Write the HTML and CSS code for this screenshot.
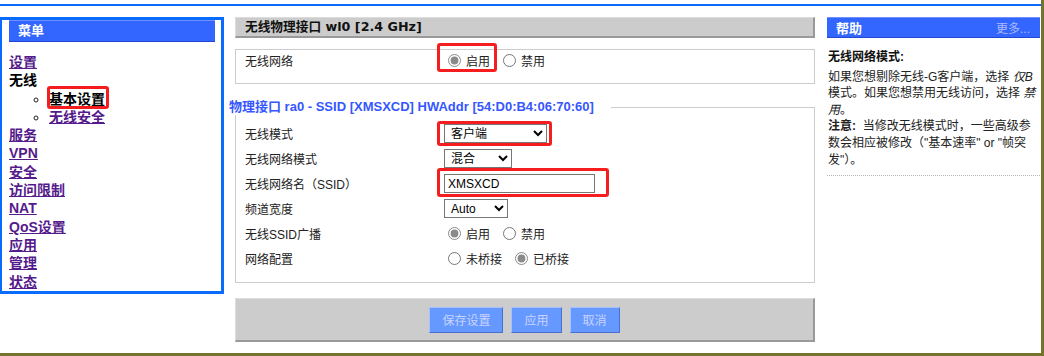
FILE: index.html
```html
<!DOCTYPE html>
<html lang="zh-CN">
<head>
<meta charset="utf-8">
<title>无线 - 基本设置</title>
<link rel="stylesheet" href="styles.css">
</head>
<body>
<div class="frame">
  <div class="topline"></div>
  <div class="layout">
    <nav class="sidebar">
      <div class="menu-head">菜单</div>
      <ul class="menu">
        <li><a href="#">设置</a></li>
        <li><span class="cur">无线</span>
          <ul class="sub">
            <li><span class="cur mark mark-nav">基本设置</span></li>
            <li><a href="#">无线安全</a></li>
          </ul>
        </li>
        <li><a href="#">服务</a></li>
        <li><a href="#">VPN</a></li>
        <li><a href="#">安全</a></li>
        <li><a href="#">访问限制</a></li>
        <li><a href="#">NAT</a></li>
        <li><a href="#">QoS设置</a></li>
        <li><a href="#">应用</a></li>
        <li><a href="#">管理</a></li>
        <li><a href="#">状态</a></li>
      </ul>
    </nav>

    <main class="main">
      <div class="bar-title">无线物理接口 wl0 [2.4 GHz]</div>
      <div class="box">
        <div class="row row-box">
          <span class="label">无线网络</span>
          <span class="val">
            <span class="mark mark-radio"><input type="radio" name="net" checked><span class="opt">启用</span></span>
            <input type="radio" name="net"><span class="opt">禁用</span>
          </span>
        </div>
      </div>

      <fieldset class="fs">
        <legend>物理接口 ra0 - SSID [XMSXCD] HWAddr [54:D0:B4:06:70:60]</legend>
        <div class="row">
          <span class="label">无线模式</span>
          <span class="val"><span class="mark mark-select"><select class="sel sel-mode"><option>客户端</option></select></span></span>
        </div>
        <div class="row">
          <span class="label">无线网络模式</span>
          <span class="val"><select class="sel sel-net"><option>混合</option></select></span>
        </div>
        <div class="row">
          <span class="label">无线网络名（SSID）</span>
          <span class="val"><span class="mark mark-input"><input class="txt" type="text" value="XMSXCD"></span></span>
        </div>
        <div class="row">
          <span class="label">频道宽度</span>
          <span class="val"><select class="sel sel-auto"><option>Auto</option></select></span>
        </div>
        <div class="row">
          <span class="label">无线SSID广播</span>
          <span class="val"><input type="radio" name="bc" checked><span class="opt">启用</span><input type="radio" name="bc"><span class="opt">禁用</span></span>
        </div>
        <div class="row">
          <span class="label">网络配置</span>
          <span class="val"><input type="radio" name="br"><span class="opt">未桥接</span><input type="radio" name="br" checked><span class="opt">已桥接</span></span>
        </div>
      </fieldset>

      <div class="btnbar">
        <button class="btn" type="button">保存设置</button>
        <button class="btn" type="button">应用</button>
        <button class="btn" type="button">取消</button>
      </div>
    </main>

    <aside class="help">
      <div class="help-head"><span class="help-title">帮助</span><a class="more" href="#">更多...</a></div>
      <div class="help-body">
        <div class="help-h">无线网络模式:</div>
        <p class="help-p">如果您想剔除无线-G客户端，选择 <i>仅B</i>模式。如果您想禁用无线访问，选择 <i>禁用</i>。<br><b>注意:</b>&nbsp; 当修改无线模式时，一些高级参数会相应被修改（"基本速率" or "帧突发"）。</p>
      </div>
    </aside>
  </div>
</div>
</body>
</html>
```

FILE: styles.css
```css
html, body {
  margin: 0;
  padding: 0;
  background: #ffffff;
}

.frame {
  width: 1044px;
  height: 356px;
  box-sizing: border-box;
  border-right: 3px solid #76732f;
  border-bottom: 3px solid #76732f;
  overflow: hidden;
  font-family: "Liberation Sans", "Noto Sans CJK SC", sans-serif;
  font-size: 12px;
  color: #222;
}

.topline {
  height: 2px;
  margin-top: 4px;
  background: #0a6cff;
}

.layout {
  display: flex;
  align-items: flex-start;
  margin-top: 11px;
}

/* ---------- sidebar ---------- */
.sidebar {
  width: 224px;
  height: 277px;
  box-sizing: border-box;
  border: 3px solid #0a6cff;
  border-left-width: 2px;
  padding: 0 6px 0 7px;
}

.menu-head {
  height: 22px;
  box-sizing: border-box;
  background: #3366ff;
  border-top: 1px solid #6f8fff;
  border-bottom: 1px solid #2247d0;
  color: #fff;
  font: bold 13px/20px "Liberation Sans", "Noto Sans CJK SC", sans-serif;
  padding-left: 9px;
}

.menu, .sub {
  margin: 0;
  padding: 0;
  list-style: none;
}

.menu {
  margin-top: 11px;
  font: bold 14px/18.3px "Liberation Sans", "Noto Sans CJK SC", sans-serif;
}

.sub {
  list-style: circle;
  padding-left: 40px;
}

.menu a {
  color: #551a8b;
  text-decoration: underline;
}

.cur {
  color: #000;
}

/* ---------- annotation marks ---------- */
.mark {
  position: relative;
  display: inline-block;
}

.mark::after {
  content: "";
  position: absolute;
  border: 3px solid #f51d1d;
  border-radius: 3px;
  pointer-events: none;
}

.mark-nav {
  line-height: 18.3px;
}

.mark-nav::after {
  left: -2px;
  right: -4px;
  top: -4px;
  bottom: -1px;
}

.mark-radio {
  display: inline-flex;
  align-items: center;
}

.mark-radio::after {
  left: -7px;
  right: -7px;
  top: -9px;
  bottom: -3px;
}

.mark-select::after {
  left: -7px;
  right: -5px;
  top: -3px;
  bottom: -3px;
}

.mark-input::after {
  left: -7px;
  right: -14px;
  top: -6px;
  bottom: -4px;
}

/* ---------- main ---------- */
.main {
  width: 580px;
  margin-left: 11px;
}

.bar-title {
  height: 21px;
  box-sizing: border-box;
  background: #cccccc;
  border-top: 1px solid #dcdcdc;
  border-left: 1px solid #dcdcdc;
  border-right: 2px solid #999;
  border-bottom: 2px solid #999;
  padding-left: 9px;
  font: bold 12.7px/18px "DejaVu Sans", "Noto Sans CJK SC", sans-serif;
  color: #111;
}

.box {
  margin-top: 11px;
  height: 35px;
  box-sizing: border-box;
  border: 1px solid #cccccc;
  padding: 0 9px;
}

.row {
  display: flex;
  align-items: center;
  height: 25px;
}

.row-box {
  height: 21px;
}

.label {
  width: 199px;
  flex: none;
  color: #222;
}

.val {
  display: flex;
  align-items: center;
}

input[type="radio"] {
  width: 13px;
  height: 13px;
  margin: 0 5px 0 4px;
  accent-color: #8a8a8a;
}

.opt {
  margin-right: 9px;
}

.mark-radio .opt {
  margin-right: 0;
}

.mark-radio + input[type="radio"] {
  margin-left: 13px;
}

.fs {
  margin: 15px 0 0 0;
  padding: 6px 9px 11px 9px;
  border: 1px solid #cccccc;
}

.fs legend {
  white-space: nowrap;
  margin-left: -16px;
  padding: 0 17px 0 0;
  font: bold 13px/16px "Liberation Sans", "Noto Sans CJK SC", sans-serif;
  color: #3657ff;
}

.sel {
  height: 19px;
  box-sizing: border-box;
  font: 12px "Liberation Sans", "Noto Sans CJK SC", sans-serif;
  color: #000;
  padding: 0 0 0 2px;
  margin: 0;
  border: 1px solid #767676;
  border-radius: 0;
  background: #fff;
}

.sel-mode { width: 103px; }
.sel-net { width: 68px; }
.sel-auto { width: 64px; }

.txt {
  width: 151px;
  height: 19px;
  box-sizing: border-box;
  margin: 0;
  padding: 0 3px;
  border: 1px solid #767676;
  font: 12px "Liberation Sans", "Noto Sans CJK SC", sans-serif;
  color: #000;
}

.btnbar {
  margin-top: 15px;
  height: 44px;
  box-sizing: border-box;
  background: #cccccc;
  border-top: 1px solid #dcdcdc;
  border-left: 1px solid #dcdcdc;
  border-right: 2px solid #999;
  border-bottom: 2px solid #999;
  display: flex;
  justify-content: center;
  align-items: center;
  gap: 8px;
}

.btn {
  height: 26px;
  padding: 0 12px;
  margin: 0;
  background: #6699ff;
  color: #c9d3ff;
  border: 1px solid;
  border-color: #a9c0ff #4b6fd0 #4b6fd0 #a9c0ff;
  font: 12px "Liberation Sans", "Noto Sans CJK SC", sans-serif;
}

/* ---------- help ---------- */
.help {
  width: 213px;
  margin-left: 12px;
}

.help-head {
  height: 21px;
  box-sizing: border-box;
  background: #3366ff;
  border-top: 1px solid #6f8fff;
  border-bottom: 1px solid #2247d0;
  display: flex;
  justify-content: space-between;
  align-items: center;
  padding: 0 10px 0 9px;
}

.help-title {
  color: #fff;
  font: bold 13px "Liberation Sans", "Noto Sans CJK SC", sans-serif;
}

.more {
  color: #aebaff;
  text-decoration: none;
  font-size: 12px;
}

.help-body {
  padding-left: 1px;
  border-bottom: 1px dotted #b5b5b5;
  padding-bottom: 7px;
}

.help-h {
  margin-top: 11px;
  font-weight: bold;
  line-height: 16.6px;
  color: #111;
}

.help-p {
  margin: 3px 0 0 0;
  line-height: 16.6px;
  color: #222;
}
```
